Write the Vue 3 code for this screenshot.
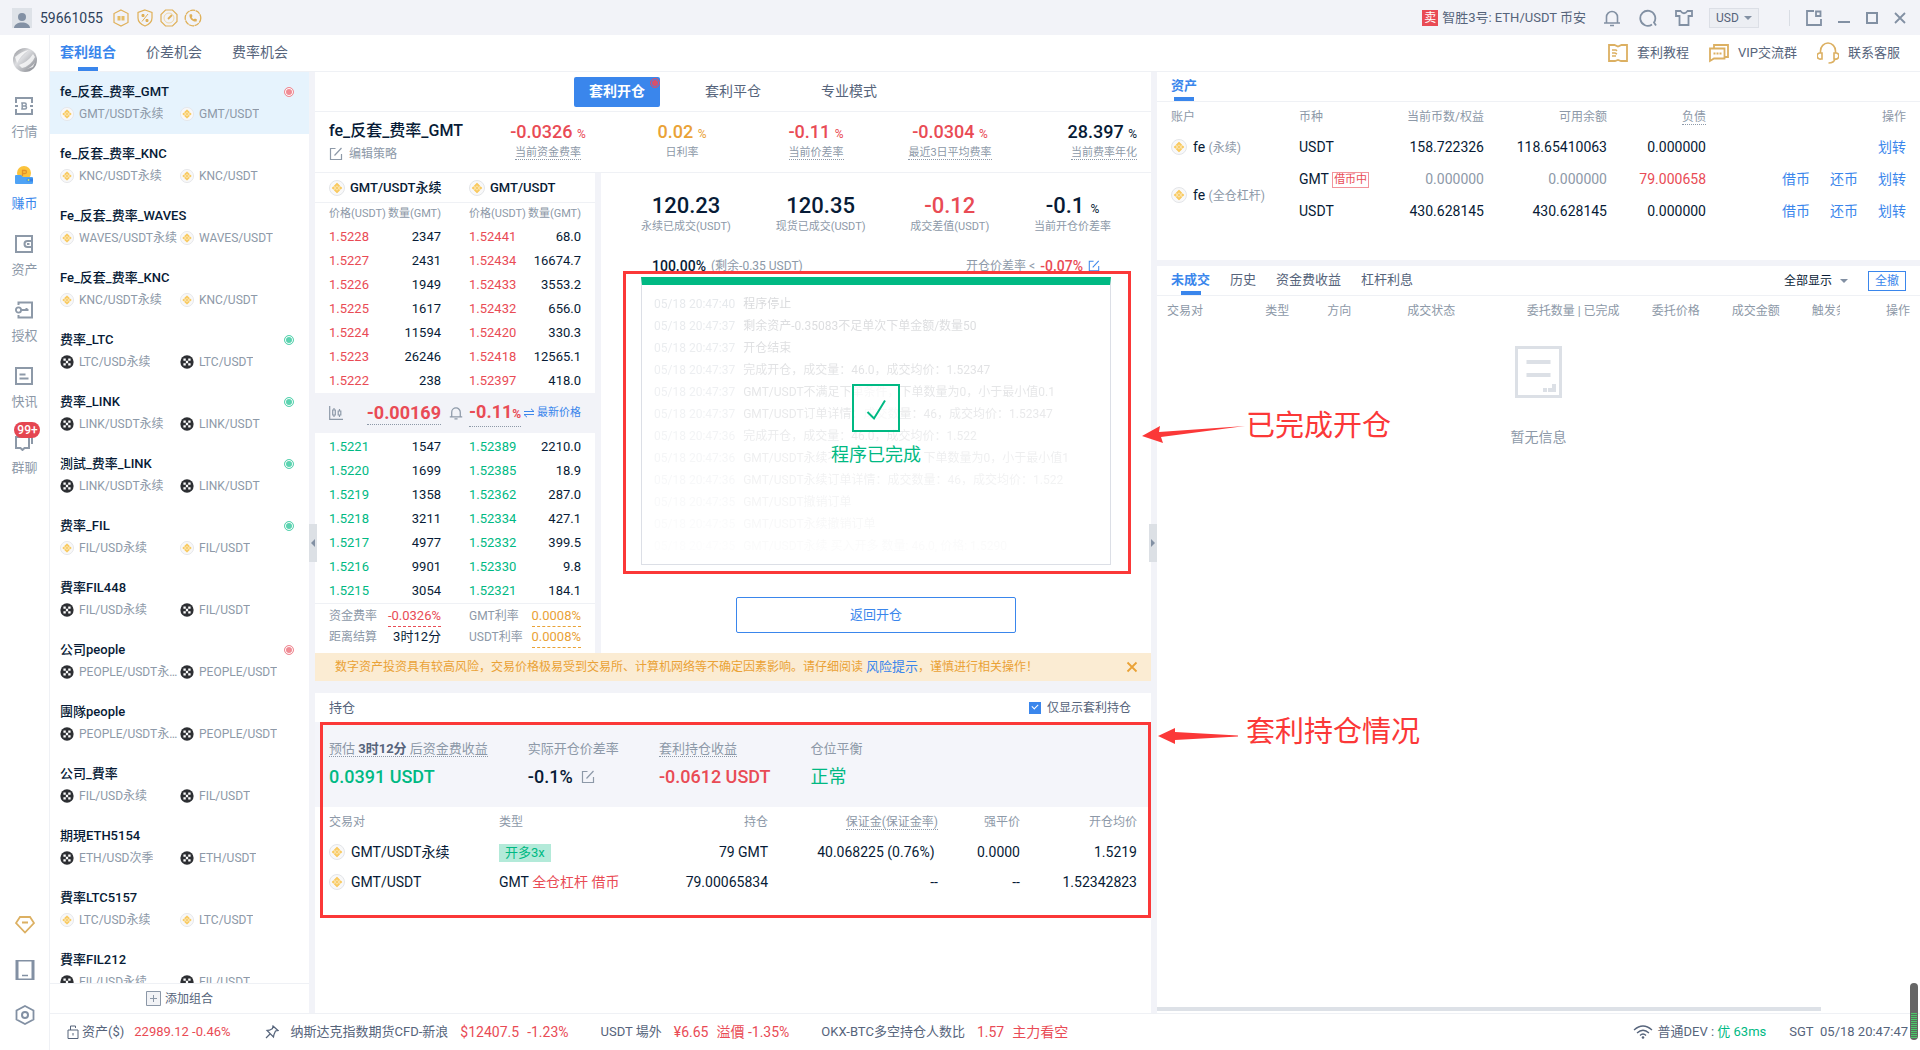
<script setup>
import { ref } from 'vue'

const topTabs = ['套利组合', '价差机会', '费率机会']
const modeTabs = ['套利开仓', '套利平仓', '专业模式']
const orderTabs = ['未成交', '历史', '资金费收益', '杠杆利息']
const badges = ['b-hex', 'b-shield', 'b-gauge', 'b-phone']

const navItems = [
  { icon: 'n-market', label: '行情' },
  { icon: 'n-earn', label: '赚币', active: true },
  { icon: 'n-wallet', label: '资产' },
  { icon: 'n-key', label: '授权' },
  { icon: 'n-news', label: '快讯' },
  { icon: 'n-chat', label: '群聊', badge: '99+' },
]

const combos = [
  { name: 'fe_反套_费率_GMT', a: 'GMT/USDT永续', b: 'GMT/USDT', coin: 'c-bn', dot: 'red', on: true },
  { name: 'fe_反套_费率_KNC', a: 'KNC/USDT永续', b: 'KNC/USDT', coin: 'c-bn' },
  { name: 'Fe_反套_费率_WAVES', a: 'WAVES/USDT永续', b: 'WAVES/USDT', coin: 'c-bn' },
  { name: 'Fe_反套_费率_KNC', a: 'KNC/USDT永续', b: 'KNC/USDT', coin: 'c-bn' },
  { name: '费率_LTC', a: 'LTC/USD永续', b: 'LTC/USDT', coin: 'c-ok', dot: 'green' },
  { name: '费率_LINK', a: 'LINK/USDT永续', b: 'LINK/USDT', coin: 'c-ok', dot: 'green' },
  { name: '測試_费率_LINK', a: 'LINK/USDT永续', b: 'LINK/USDT', coin: 'c-ok', dot: 'green' },
  { name: '费率_FIL', a: 'FIL/USD永续', b: 'FIL/USDT', coin: 'c-bn', dot: 'green' },
  { name: '費率FIL448', a: 'FIL/USD永续', b: 'FIL/USDT', coin: 'c-ok' },
  { name: '公司people', a: 'PEOPLE/USDT永续', b: 'PEOPLE/USDT', coin: 'c-ok', dot: 'red' },
  { name: '團隊people', a: 'PEOPLE/USDT永续', b: 'PEOPLE/USDT', coin: 'c-ok' },
  { name: '公司_費率', a: 'FIL/USD永续', b: 'FIL/USDT', coin: 'c-ok' },
  { name: '期現ETH5154', a: 'ETH/USD次季', b: 'ETH/USDT', coin: 'c-ok' },
  { name: '費率LTC5157', a: 'LTC/USD永续', b: 'LTC/USDT', coin: 'c-bn' },
  { name: '費率FIL212', a: 'FIL/USD永续', b: 'FIL/USDT', coin: 'c-ok' },
]

const rates = [
  { v: '-0.0326', l: '当前资金费率', c: 'red', tip: true },
  { v: '0.02', l: '日利率', c: 'orange' },
  { v: '-0.11', l: '当前价差率', c: 'red', tip: true },
  { v: '-0.0304', l: '最近3日平均费率', c: 'red', tip: true },
  { v: '28.397', l: '当前费率年化', c: '', tip: true },
]

const asks = [
  ['1.5228', '2347', '1.52441', '68.0'],
  ['1.5227', '2431', '1.52434', '16674.7'],
  ['1.5226', '1949', '1.52433', '3553.2'],
  ['1.5225', '1617', '1.52432', '656.0'],
  ['1.5224', '11594', '1.52420', '330.3'],
  ['1.5223', '26246', '1.52418', '12565.1'],
  ['1.5222', '238', '1.52397', '418.0'],
]
const bids = [
  ['1.5221', '1547', '1.52389', '2210.0'],
  ['1.5220', '1699', '1.52385', '18.9'],
  ['1.5219', '1358', '1.52362', '287.0'],
  ['1.5218', '3211', '1.52334', '427.1'],
  ['1.5217', '4977', '1.52332', '399.5'],
  ['1.5216', '9901', '1.52330', '9.8'],
  ['1.5215', '3054', '1.52321', '184.1'],
]

const deals = [
  { v: '120.23', l: '永续已成交(USDT)' },
  { v: '120.35', l: '现货已成交(USDT)' },
  { v: '-0.12', l: '成交差值(USDT)', c: 'red' },
  { v: '-0.1', l: '当前开仓价差率', unit: '%' },
]

const logs = [
  ['05/18 20:47:40', '程序停止'],
  ['05/18 20:47:37', '剩余资产-0.35083不足单次下单金额/数量50'],
  ['05/18 20:47:37', '开仓结束'],
  ['05/18 20:47:37', '完成开仓，成交量：46.0，成交均价：1.52347'],
  ['05/18 20:47:37', 'GMT/USDT不满足下单条件，下单数量为0，小于最小值0.1'],
  ['05/18 20:47:37', 'GMT/USDT订单详情：成交数量：46，成交均价：1.52347'],
  ['05/18 20:47:36', '完成开仓，成交量：46.0，成交均价：1.522'],
  ['05/18 20:47:36', 'GMT/USDT永续不满足下单条件，下单数量为0，小于最小值1'],
  ['05/18 20:47:36', 'GMT/USDT永续订单详情：成交数量：46，成交均价：1.522'],
  ['05/18 20:47:35', 'GMT/USDT撤销订单'],
  ['05/18 20:47:35', 'GMT/USDT永续撤销订单'],
  ['05/18 20:47:35', 'GMT/USDT永续 买入开多 数量: 46.0, 价格: 1.5290'],
]

const onlyArb = ref(true)
const currency = ref('USD')
const orderFilter = ref('全部显示')
</script>

<template>
  <div class="app">
    <svg class="sprite" aria-hidden="true">
      <symbol id="c-bn" viewBox="0 0 16 16">
        <circle cx="8" cy="8" r="7.5" fill="#f8f8f9" stroke="#e3e5e8" />
        <path d="M8 2.800 13.200 8 8 13.200 2.800 8Z" fill="#fbe3ab" />
        <path d="M8 2.800 11 5.800 9.800 7 8 5.200 6.200 7 5 5.800ZM8 13.200 11 10.200 9.800 9 8 10.800 6.200 9 5 10.200ZM4.200 6.600 5.600 8 4.200 9.400 2.800 8ZM11.800 6.600 13.200 8 11.800 9.400 10.400 8ZM8 6.600 9.400 8 8 9.400 6.600 8Z" fill="#f8c95f" />
      </symbol>
      <symbol id="c-ok" viewBox="0 0 16 16">
        <circle cx="8" cy="8" r="7.6" fill="#2d2f33" />
        <path d="M3.900 3.900h2.700v2.700H3.900ZM9.400 3.900h2.700v2.700H9.400ZM6.700 6.700h2.600v2.600H6.700ZM3.900 9.400h2.700v2.700H3.900ZM9.400 9.400h2.700v2.700H9.400Z" fill="#fff" />
      </symbol>
      <symbol id="edit" viewBox="0 0 14 14">
        <path d="M6.5 1.5H1.5V12.5H12.5V7M5.5 8.5 12.5 1" fill="none" stroke="currentColor" stroke-width="1.2" />
      </symbol>
      <symbol id="bell" viewBox="0 0 18 18">
        <path d="M1 14H17M3.5 14V8a5.5 5.5 0 0 1 11 0V14M7 16.5h4" fill="none" stroke="currentColor" stroke-width="1.6" />
      </symbol>
      <symbol id="b-hex" viewBox="0 0 18 18">
        <path d="M9 1 16 4.5V13.500L9 17 2 13.500V4.500Z" fill="none" stroke="#dfb058" stroke-width="1.2" />
        <path d="M5.500 7h3v4.500h-3ZM9.500 7h3v4.500h-3Z" fill="#e6bd66" />
      </symbol>
      <symbol id="b-shield" viewBox="0 0 18 18">
        <path d="M9 1 16 3.500V9C16 13 13 15.500 9 17 5 15.500 2 13 2 9V3.500Z" fill="none" stroke="#dfb058" stroke-width="1.2" />
        <path d="M6 12.500 12 5M6 5.500h2v2H6ZM10 10.500h2v2h-2Z" fill="#dfb058" stroke="#dfb058" />
      </symbol>
      <symbol id="b-gauge" viewBox="0 0 18 18">
        <path d="M5.500 1h7L17 5.500v7L12.500 17h-7L1 12.500v-7Z" fill="none" stroke="#dfb058" stroke-width="1.2" />
        <circle cx="9" cy="9" r="5" fill="none" stroke="#efd8a8" />
        <path d="M8 10 12 6" stroke="#dfb058" stroke-width="1.8" />
      </symbol>
      <symbol id="b-phone" viewBox="0 0 18 18">
        <circle cx="9" cy="9" r="7.800" fill="none" stroke="#dfb058" stroke-width="1.300" stroke-dasharray="5 .6" />
        <path d="M5.500 5.500C5 9.500 8.500 13 12.500 12.500L13 10.500 11 9.500 9.800 10.300C9 10 8 9 7.700 8.200L8.500 7 7.500 5Z" fill="#dfb058" />
      </symbol>
      <symbol id="n-market" viewBox="0 0 18 18">
        <path d="M1 6V1H17V6M1 12V17H17V12" fill="none" stroke="currentColor" stroke-width="2" />
        <path d="M0 8h3v2H0ZM15 8h3v2h-3Z" fill="currentColor" />
        <path d="M7.200 5.500V12.500M6.200 6h3.500a1.400 1.400 0 0 1 0 3H7.200h2.800a1.500 1.500 0 0 1 0 3H6.200" fill="none" stroke="currentColor" stroke-width="1.500" />
      </symbol>
      <symbol id="n-earn" viewBox="0 0 18 18">
        <circle cx="9" cy="7" r="7" fill="#fbc33c" />
        <path d="M7.500 10V4M7 4.500h3a1.200 1.200 0 0 1 0 3H7.500h3" fill="none" stroke="#e2932a" stroke-width="1.300" />
        <path d="M0 10Q0 9 1 9H6L8 11H17Q18 11 18 12V17Q18 18 17 18H1Q0 18 0 17Z" fill="#4fa3f5" />
        <path d="M13 12.500h5v3h-5a1.500 1.500 0 0 1 0-3Z" fill="#3483e8" />
        <circle cx="13.500" cy="14" r="1" fill="#cfe96a" />
      </symbol>
      <symbol id="n-wallet" viewBox="0 0 18 18">
        <path d="M1 1H17V17H1ZM17 6H12.500a3 3 0 0 0 0 6H17" fill="none" stroke="currentColor" stroke-width="2" />
        <path d="M12 8h2.500v2H12Z" fill="currentColor" />
      </symbol>
      <symbol id="n-key" viewBox="0 0 18 18">
        <path d="M3.500 4V1.500H17V16.500H3.500V14" fill="none" stroke="currentColor" stroke-width="2" />
        <circle cx="3.500" cy="9" r="2.600" fill="none" stroke="currentColor" stroke-width="1.800" />
        <path d="M6 9H13.500M11.500 7v2" stroke="currentColor" stroke-width="2" />
      </symbol>
      <symbol id="n-news" viewBox="0 0 18 18">
        <path d="M1 1H17V17H1ZM4.500 7.500H10.500M4.500 11.500H13.500" fill="none" stroke="currentColor" stroke-width="2" />
      </symbol>
      <symbol id="n-chat" viewBox="0 0 18 18">
        <path d="M1 4V15H5.500L7.500 17 9.500 15H14V4ZM17 1V11" fill="none" stroke="currentColor" stroke-width="2" />
      </symbol>
    </svg>

    <header class="titlebar">
      <svg class="avatar" viewBox="0 0 20 20"><path d="M0 0H20V20H0Z" fill="#dee2e8" /><circle cx="10" cy="9" r="4" fill="#8391a5" /><path d="M2 20C2 12.500 18 12.500 18 20Z" fill="#8391a5" /></svg>
      <span class="uid">59661055</span>
      <svg v-for="b in badges" :key="b" class="badge-icon"><use :href="'#' + b" /></svg>
      <div class="title-right">
        <span class="sell">卖</span>
        <span class="signal">智胜3号: ETH/USDT 币安</span>
        <button class="ib" aria-label="通知"><svg class="i18"><use href="#bell" /></svg></button>
        <button class="ib" aria-label="搜索"><svg class="i18" viewBox="0 0 18 18"><path d="M13 15.500A7.500 7.500 0 1 1 15 13.500L17 16.500" fill="none" stroke="currentColor" stroke-width="1.800" /></svg></button>
        <button class="ib" aria-label="皮肤"><svg class="i18" viewBox="0 0 18 18"><path d="M1 2H5.500Q9 6.500 12.500 2H17V7H13.500V16H4.500V7H1Z" fill="none" stroke="currentColor" stroke-width="1.800" /></svg></button>
        <span class="currency">
          <select v-model="currency" aria-label="计价货币"><option>USD</option></select>
          <i class="caret"></i>
        </span>
        <i class="sep"></i>
        <button class="ib" aria-label="弹出"><svg class="i16" viewBox="0 0 16 16"><path d="M8 1H1V15H15V9M10 1.500H14.500V6H10Z" fill="none" stroke="currentColor" stroke-width="1.800" /></svg></button>
        <button class="ib" aria-label="最小化"><svg class="i12" viewBox="0 0 12 12"><path d="M0 10H12" stroke="currentColor" stroke-width="2" /></svg></button>
        <button class="ib" aria-label="最大化"><svg class="i12" viewBox="0 0 12 12"><path d="M1 1H11V11H1Z" fill="none" stroke="currentColor" stroke-width="2" /></svg></button>
        <button class="ib" aria-label="关闭"><svg class="i12" viewBox="0 0 12 12"><path d="M1 1 11 11M11 1 1 11" stroke="currentColor" stroke-width="1.800" /></svg></button>
      </div>
    </header>

    <div class="shell">
      <aside class="rail">
        <svg class="logo" viewBox="0 0 24 24">
          <defs><linearGradient id="lg" x1="0" y1="0" x2="1" y2="1"><stop offset="0" stop-color="#8e9095" /><stop offset=".4" stop-color="#dcdde0" /><stop offset="1" stop-color="#7d8087" /></linearGradient></defs>
          <circle cx="12" cy="12" r="12" fill="url(#lg)" />
          <path d="M2 9Q9 3 16 2 8 7 4 15ZM6 17Q15 14 20 6L22 9Q18 18 9 20ZM14 21Q20 18 22 14L20 19Z" fill="#fff" opacity=".75" />
        </svg>
        <nav>
          <a v-for="n in navItems" :key="n.label" href="#" class="nav" :class="{ active: n.active }">
            <svg class="i18"><use :href="'#' + n.icon" /></svg>
            <span>{{ n.label }}</span>
            <b v-if="n.badge" class="count">{{ n.badge }}</b>
          </a>
        </nav>
        <div class="rail-foot">
          <button class="ib gold" aria-label="会员"><svg class="i20" viewBox="0 0 20 20"><path d="M5 2H15L19 8 10 17.500 1 8Z M7 7.500H13" fill="none" stroke="currentColor" stroke-width="1.800" /></svg></button>
          <button class="ib" aria-label="手机"><svg class="i20" viewBox="0 0 20 20"><path d="M2 0H18V20H2Z" fill="none" stroke="currentColor" stroke-width="3" /><path d="M7 15.500H13" stroke="currentColor" stroke-width="1.500" /></svg></button>
          <button class="ib" aria-label="设置"><svg class="i20" viewBox="0 0 20 20"><path d="M10 1 18.500 5.500V14.500L10 19 1.500 14.500V5.500Z" fill="none" stroke="currentColor" stroke-width="1.800" /><circle cx="10" cy="10" r="3" fill="none" stroke="currentColor" stroke-width="2" /></svg></button>
        </div>
      </aside>

      <div class="body">
        <nav class="subnav">
          <a v-for="(t, i) in topTabs" :key="t" href="#" :class="{ on: i === 0 }">{{ t }}</a>
          <div class="help">
            <a href="#"><svg class="i20" viewBox="0 0 20 20"><path d="M1 2H6.500L10 3.500 13.500 2H19V18H13L10 17 7 18H1Z" fill="none" stroke="currentColor" stroke-width="1.800" /><path d="M4 7h4l1 1M4 10h3l2 1M4 13h4" fill="none" stroke="currentColor" stroke-width="1.400" /></svg><span>套利教程</span></a>
            <a href="#"><svg class="i20" viewBox="0 0 20 20"><path d="M5 5V2H19V14H16M1 5.500H15.500V15.500H5L1 18Z" fill="none" stroke="currentColor" stroke-width="1.800" /><path d="M4.500 9.500h2v2h-2ZM7.500 9.500h2v2h-2ZM10.500 9.500h2v2h-2Z" fill="currentColor" /></svg><span>VIP交流群</span></a>
            <a href="#"><svg class="i22" viewBox="0 0 22 22"><path d="M3.500 11V9a7.500 8 0 0 1 15 0V11M2.500 11h2.500v6H4a3 3 0 0 1-1.500-6ZM19.500 11H17v6h1a3 3 0 0 0 1.500-6ZM18 17Q17 21 11.500 21" fill="none" stroke="currentColor" stroke-width="1.600" /></svg><span>联系客服</span></a>
          </div>
        </nav>

        <div class="cols">
          <section class="combos">
            <ul>
              <li v-for="(c, i) in combos" :key="i" :class="{ on: c.on }">
                <div class="combo-name"><span>{{ c.name }}</span><i v-if="c.dot" class="dot" :class="c.dot"></i></div>
                <div class="combo-pairs">
                  <span><svg class="coin-s"><use :href="'#' + c.coin" /></svg><em>{{ c.a }}</em></span>
                  <span><svg class="coin-s"><use :href="'#' + c.coin" /></svg><em>{{ c.b }}</em></span>
                </div>
              </li>
            </ul>
            <button class="add"><svg viewBox="0 0 15 15"><path d="M.5.5H14.500V14.500H.5Z" fill="#f2f3f6" stroke="#8b97a7" /><path d="M7.500 4V11M4 7.500H11" stroke="#8b97a7" /></svg>添加组合</button>
          </section>

          <main class="center">
            <button class="handle left" aria-label="收起左栏"></button>
            <button class="handle right" aria-label="收起右栏"></button>
            <div class="modes">
              <button v-for="(m, i) in modeTabs" :key="m" :class="{ on: i === 0 }">{{ m }}<i v-if="i === 0" class="dot rec"></i></button>
            </div>
            <div class="strategy">
              <div class="strategy-name">
                <h1>fe_反套_费率_GMT</h1>
                <button><svg class="i14"><use href="#edit" /></svg>编辑策略</button>
              </div>
              <div v-for="r in rates" :key="r.l" class="rate">
                <div class="rate-v" :class="r.c">{{ r.v }} <small>%</small></div>
                <div class="rate-l"><span :class="{ tip: r.tip }">{{ r.l }}</span></div>
              </div>
            </div>

            <div class="trade">
              <section class="book">
                <div class="book-head">
                  <div><svg class="coin"><use href="#c-bn" /></svg>GMT/USDT永续</div>
                  <div><svg class="coin"><use href="#c-bn" /></svg>GMT/USDT</div>
                </div>
                <table class="book-table">
                  <thead><tr><th>价格(USDT)</th><th>数量(GMT)</th><th>价格(USDT)</th><th>数量(GMT)</th></tr></thead>
                  <tbody class="asks"><tr v-for="r in asks" :key="r[0]"><td v-for="(v, i) in r" :key="i">{{ v }}</td></tr></tbody>
                </table>
                <div class="mid">
                  <div>
                    <svg class="i14 gray" viewBox="0 0 14 14"><path d="M.7 0V13.300H14M5 2V4M5 9v2M3.700 4h2.600v5H3.700ZM10.500 3V5M10.500 9v2M9.200 5h2.600v4H9.200Z" fill="none" stroke="currentColor" stroke-width="1.200" /></svg>
                    <b class="tip big">-0.00169</b>
                    <svg class="i14 gray mid-bell"><use href="#bell" /></svg>
                  </div>
                  <div>
                    <b class="tip big">-0.11<small>%</small></b>
                    <button><svg viewBox="0 0 10 10"><path d="M0 3.500H10L7 .8M10 6.500H0L3 9.200" fill="none" stroke="currentColor" /></svg>最新价格</button>
                  </div>
                </div>
                <table class="book-table bids-table">
                  <tbody class="bids"><tr v-for="r in bids" :key="r[0]"><td v-for="(v, i) in r" :key="i">{{ v }}</td></tr></tbody>
                </table>
                <div class="book-foot">
                  <div><span>资金费率</span><b class="red dash">-0.0326%</b></div>
                  <div><span>GMT利率</span><b class="orange dash">0.0008%</b></div>
                  <div><span>距离结算</span><b>3时12分</b></div>
                  <div><span>USDT利率</span><b class="orange dash">0.0008%</b></div>
                </div>
              </section>

              <section class="run">
                <div class="deals">
                  <div v-for="d in deals" :key="d.l">
                    <div class="deal-v" :class="d.c">{{ d.v }}<small v-if="d.unit">{{ d.unit }}</small></div>
                    <div class="deal-l">{{ d.l }}</div>
                  </div>
                </div>
                <div class="progress">
                  <b>100.00%</b><span>(剩余-0.35 USDT)</span>
                  <div><span>开仓价差率 &lt;</span><b class="red">-0.07%</b><svg class="i12 blue"><use href="#edit" /></svg></div>
                </div>
                <div class="log">
                  <ul><li v-for="(l, i) in logs" :key="i"><time>{{ l[0] }}</time><span>{{ l[1] }}</span></li></ul>
                  <div class="done">
                    <svg viewBox="0 0 48 48"><path d="M1 1H47V47H1Z" fill="#fff" fill-opacity=".7" /><path d="M1 1H47V47H1ZM15.500 28 22 34.500 33 16.500" fill="none" stroke="#00b983" stroke-width="2" /></svg>
                    <span>程序已完成</span>
                  </div>
                  <div class="mark mark-log"></div>
                  <div class="note note-log">
                    <svg viewBox="0 0 104 40"><path d="M0 30 18 20 17 26 103 20 19 31 21 37Z" fill="#fb3838" /></svg>
                    <span>已完成开仓</span>
                  </div>
                </div>
                <button class="back">返回开仓</button>
              </section>
            </div>

            <div class="warn">
              <p>数字资产投资具有较高风险，交易价格极易受到交易所、计算机网络等不确定因素影响。请仔细阅读 <a href="#">风险提示</a>，谨慎进行相关操作！</p>
              <button class="ib" aria-label="关闭提示"><svg class="i12" viewBox="0 0 12 12"><path d="M1.500 1.500 10.500 10.500M10.500 1.500 1.500 10.500" stroke="currentColor" stroke-width="1.800" /></svg></button>
            </div>

            <section class="positions">
              <div class="pos-head">
                <h2>持仓</h2>
                <label><input v-model="onlyArb" type="checkbox" />仅显示套利持仓</label>
              </div>
              <div class="pos-body">
                <div class="summary">
                  <div><div class="sum-l"><span class="tip">预估 <b>3时12分</b> 后资金费收益</span></div><div class="sum-v green">0.0391 USDT</div></div>
                  <div><div class="sum-l">实际开仓价差率</div><div class="sum-v">-0.1% <svg class="i14 gray"><use href="#edit" /></svg></div></div>
                  <div><div class="sum-l"><span class="tip">套利持仓收益</span></div><div class="sum-v red">-0.0612 USDT</div></div>
                  <div><div class="sum-l">仓位平衡</div><div class="sum-v plain green">正常</div></div>
                </div>
                <table class="pos-table">
                  <colgroup><col class="w170" /><col class="w130" /><col class="w139" /><col class="w170" /><col class="w82" /><col class="w117" /></colgroup>
                  <thead><tr><th>交易对</th><th>类型</th><th class="r">持仓</th><th class="r"><span class="tip">保证金(保证金率)</span></th><th class="r">强平价</th><th class="r">开仓均价</th></tr></thead>
                  <tbody>
                    <tr><td><span class="pair"><svg class="coin"><use href="#c-bn" /></svg>GMT/USDT永续</span></td><td><span class="tag">开多3x</span></td><td class="r">79 GMT</td><td class="r">40.068225 (0.76%)&nbsp;</td><td class="r">0.0000</td><td class="r">1.5219</td></tr>
                    <tr><td><span class="pair"><svg class="coin"><use href="#c-bn" /></svg>GMT/USDT</span></td><td>GMT <span class="red">全仓杠杆 借币</span></td><td class="r">79.00065834</td><td class="r">--</td><td class="r">--</td><td class="r">1.52342823</td></tr>
                  </tbody>
                </table>
                <div class="mark mark-pos"></div>
                <div class="note note-pos">
                  <svg viewBox="0 0 80 40"><path d="M0 24 17 16 17 20 80 23.500 80 24.500 17 28 17 32Z" fill="#fb3838" /></svg>
                  <span>套利持仓情况</span>
                </div>
              </div>
            </section>
          </main>

          <div class="side">
            <section class="assets">
              <div class="tabs"><a href="#" class="on">资产</a></div>
              <table class="asset-table">
                <colgroup><col class="w128" /><col class="w95" /><col class="w90" /><col class="w123" /><col class="w99" /><col class="w200" /></colgroup>
                <thead><tr><th>账户</th><th>币种</th><th class="r">当前币数/权益</th><th class="r">可用余额</th><th class="r"><span class="tip">负债</span></th><th class="r">操作</th></tr></thead>
                <tbody>
                  <tr><td><span class="pair"><svg class="coin"><use href="#c-bn" /></svg><span>fe <em>(永续)</em></span></span></td><td>USDT</td><td class="r">158.722326</td><td class="r">118.65410063</td><td class="r">0.000000</td><td class="ops"><a href="#">划转</a></td></tr>
                  <tr><td rowspan="2"><span class="pair"><svg class="coin"><use href="#c-bn" /></svg><span>fe <em>(全仓杠杆)</em></span></span></td><td>GMT <span class="borrow">借币中</span></td><td class="r zero">0.000000</td><td class="r zero">0.000000</td><td class="r red">79.000658</td><td class="ops"><a href="#">借币</a><a href="#">还币</a><a href="#">划转</a></td></tr>
                  <tr><td>USDT</td><td class="r">430.628145</td><td class="r">430.628145</td><td class="r">0.000000</td><td class="ops"><a href="#">借币</a><a href="#">还币</a><a href="#">划转</a></td></tr>
                </tbody>
              </table>
            </section>
            <section class="orders">
              <div class="tabs">
                <a v-for="(t, i) in orderTabs" :key="t" href="#" :class="{ on: i === 0 }">{{ t }}</a>
                <div class="order-tools">
                  <span class="filter"><select v-model="orderFilter" aria-label="筛选"><option>全部显示</option></select><i class="caret"></i></span>
                  <button class="cancel">全撤</button>
                </div>
              </div>
              <table class="order-table">
                <colgroup><col class="w98" /><col class="w62" /><col class="w80" /><col class="w95" /><col class="w117" /><col class="w80" /><col class="w80" /><col class="w60" /><col class="w70" /></colgroup>
                <thead><tr><th>交易对</th><th>类型</th><th>方向</th><th>成交状态</th><th class="r">委托数量 | 已完成</th><th class="r">委托价格</th><th class="r">成交金额</th><th class="clip">触发条件</th><th class="r">操作</th></tr></thead>
              </table>
              <div class="empty">
                <svg viewBox="0 0 47 52"><path d="M1.500 1.500H45.500V50.500H1.500Z" fill="none" stroke="#dce0e6" stroke-width="3" /><path d="M11.500 14H35.500V18H11.500ZM11.500 27H35.500V31H11.500ZM28 42h4v4h-4ZM33 42h4v-4h4v8h-8Z" fill="#dce0e6" /></svg>
                <p>暂无信息</p>
              </div>
              <div class="hscroll"><i></i></div>
            </section>
          </div>
        </div>

        <footer class="status">
          <svg class="lock" viewBox="0 0 12 14"><path d="M1 5H11V13.500H1ZM3.500 5V1H8.500V3M6 8v2.500" fill="none" stroke="currentColor" /></svg>
          <span class="st-asset">资产($)</span><span class="red st-first">22989.12 -0.46%</span>
          <svg class="pin" viewBox="0 0 14 14"><path d="M8 1 13 5.500 10.500 6 9 9.500 8.500 12 2 5.500 4.500 5.200 7.500 3.500ZM5 9 1 13" fill="none" stroke="currentColor" stroke-width="1.200" /></svg>
          <span>纳斯达克指数期货CFD-新浪</span><span class="red st-v">$12407.5</span><span class="red st-w">-1.23%</span>
          <span class="st-g">USDT 場外</span><span class="red st-v">¥6.65</span><span class="red st-w">溢價 -1.35%</span>
          <span class="st-g">OKX-BTC多空持仓人数比</span><span class="red st-v">1.57</span><span class="red st-w">主力看空</span>
          <div class="net">
            <svg viewBox="0 0 20 14"><path d="M1 5Q10-3 19 5M4 8Q10 2.500 16 8M7 10.500Q10 7.500 13 10.500" fill="none" stroke="currentColor" stroke-width="1.300" /><circle cx="10" cy="12.500" r="1.300" fill="currentColor" /></svg>
            <span>普通DEV : <b class="green">优 63ms</b></span>
            <span class="clock">SGT&nbsp; 05/18 20:47:47</span>
          </div>
        </footer>
      </div>
    </div>
    <div class="meter"><i></i></div>
  </div>
</template>

<style>
body { margin: 0; background: #fff; }
</style>

<style scoped>
.app {
  --ink: #071b36; --mid: #56647b; --gray: #8d99a8; --line: #eff1f5; --blue: #3a86ec;
  --red: #e94b55; --green: #00b983; --orange: #eaa236; --bg: #f2f3f8;
  position: relative; display: flex; flex-direction: column; height: 100vh; overflow: hidden;
  font-family: Roboto, "Noto Sans CJK SC", sans-serif; font-size: 13px; line-height: 20px; color: var(--ink); background: #fff;
}
.app *, .app *::before, .app *::after { box-sizing: border-box; }
.sprite { position: absolute; width: 0; height: 0; }
svg { display: block; flex: none; }
button, select, input { font: inherit; color: inherit; margin: 0; padding: 0; border: 0; background: none; border-radius: 0; }
a { color: inherit; text-decoration: none; }
ul, p, h1, h2 { margin: 0; padding: 0; list-style: none; font-weight: 400; }
em, i { font-style: normal; }
table { border-collapse: collapse; table-layout: fixed; width: 100%; }
th, td { padding: 0; font-weight: 400; text-align: left; white-space: nowrap; }
.r { text-align: right; }
.red { color: var(--red); }
.green { color: var(--green); }
.orange { color: var(--orange); }
.blue { color: var(--blue); }
.gray { color: var(--gray); }
.tip { border-bottom: 1px dotted var(--gray); }
.ib { display: block; color: #8290a3; }
.i12 { width: 12px; height: 12px; }
.i14 { width: 14px; height: 14px; }
.i16 { width: 16px; height: 16px; }
.i18 { width: 18px; height: 18px; }
.i20 { width: 20px; height: 20px; }
.i22 { width: 22px; height: 22px; }
.coin { width: 16px; height: 16px; }
.coin-s { width: 14px; height: 14px; }
.caret { border: 4px solid transparent; border-top-color: #8290a3; border-bottom: 0; pointer-events: none; }

.titlebar { flex: none; display: flex; align-items: center; height: 35px; padding: 0 14px 0 12px; background: var(--bg); }
.avatar { width: 20px; height: 20px; }
.uid { margin: 0 9px 0 8px; font-size: 14px; color: #2d3f5a; }
.badge-icon { width: 18px; height: 18px; margin-right: 6px; }
.title-right { display: flex; align-items: center; margin-left: auto; color: var(--mid); }
.sell { width: 16px; height: 16px; background: var(--red); color: #fff; font-size: 12px; line-height: 16px; text-align: center; }
.signal { margin: 0 17px 0 4px; }
.title-right .ib { margin-right: 16px; }
.title-right .ib + .ib { margin-left: 2px; }
.currency { position: relative; display: flex; align-items: center; width: 50px; height: 20px; border: 1px solid #dcdfe6; font-size: 12px; background: #eceef3; }
.currency select { appearance: none; width: 100%; height: 18px; padding-left: 6px; line-height: 18px; }
.currency .caret { position: absolute; right: 6px; }
.sep { width: 1px; height: 16px; margin: 0 16px 0 30px; background: #d9dde4; }
.title-right .sep ~ .ib + .ib { margin-left: 0; }
.title-right .sep ~ .ib:last-child { margin-right: 0; }

.shell { flex: 1; display: flex; min-height: 0; }
.rail { flex: none; display: flex; flex-direction: column; align-items: center; width: 50px; border-right: 1px solid var(--line); padding: 13px 0 25px; }
.logo { width: 24px; height: 24px; margin-bottom: 25px; }
.nav { position: relative; display: flex; flex-direction: column; align-items: center; height: 66px; color: var(--gray); }
.nav span { margin-top: 7px; }
.nav.active { height: 72px; padding-top: 3px; color: var(--blue); }
.nav.active span { margin-top: 10px; }
.count { position: absolute; top: -11px; left: 3px; width: 26px; height: 16px; border-radius: 8px; background: #e54651; color: #fff; font-size: 12px; font-weight: 500; line-height: 16px; text-align: center; }
.rail-foot { display: flex; flex-direction: column; gap: 25px; margin-top: auto; }
.rail-foot .gold { color: #dcb062; }

.body { flex: 1; display: flex; flex-direction: column; min-width: 0; }
.subnav { flex: none; display: flex; gap: 30px; height: 37px; padding: 0 20px 0 10px; border-bottom: 1px solid var(--line); font-size: 14px; line-height: 34px; color: var(--mid); }
.subnav > a.on, .tabs > a.on { position: relative; color: var(--blue); font-weight: 700; }
.subnav > a.on::after, .tabs > a.on::after { content: ""; position: absolute; left: 50%; bottom: 0; width: 20px; height: 4px; margin-left: -10px; background: var(--blue); }
.help { display: flex; gap: 20px; margin-left: auto; font-size: 13px; }
.help a { display: flex; align-items: center; gap: 9px; }
.help svg { color: #dcb062; }

.cols { flex: 1; display: flex; gap: 6px; min-height: 0; background: var(--bg); }
.combos { flex: 0 0 259px; display: flex; flex-direction: column; min-width: 0; background: #fff; }
.combos ul { flex: 1; min-height: 0; overflow: hidden; }
.combos li { height: 62px; padding: 10px 15px 0 10px; }
.combos li.on { background: #e6f3fd; }
.combo-name { display: flex; align-items: center; justify-content: space-between; font-weight: 500; }
.combo-pairs { display: flex; font-size: 12px; line-height: 24px; color: var(--gray); }
.combo-pairs > span { display: flex; align-items: center; gap: 5px; flex: 0 0 120px; min-width: 0; padding-right: 1px; }
.combo-pairs > span + span { flex: 1; }
.combo-pairs em { overflow: hidden; text-overflow: ellipsis; white-space: nowrap; }
.dot { flex: none; width: 10px; height: 10px; border: 1px solid; border-radius: 50%; background: currentColor; box-shadow: inset 0 0 0 1px #fff; }
.dot.red { color: #f08c95; }
.dot.green { color: #5bd3b0; }
.add { flex: none; display: flex; align-items: center; justify-content: center; gap: 4px; height: 30px; border-top: 1px solid var(--line); font-size: 12px; color: var(--mid); }
.add svg { width: 15px; height: 15px; }

.center { position: relative; z-index: 1; flex: 836 1 0; display: flex; flex-direction: column; min-width: 0; }
.handle { position: absolute; top: 452px; z-index: 2; width: 8px; height: 38px; background: #dce0e5; }
.handle::after { content: ""; display: block; margin: 0 auto; width: 4px; border: 4px solid transparent; }
.handle.left { left: -6px; }
.handle.left::after { border-right-color: #8290a3; border-left: 0; }
.handle.right { right: -6px; }
.handle.right::after { border-left-color: #8290a3; border-right: 0; }
.modes { flex: none; display: flex; justify-content: center; align-items: center; gap: 30px; height: 40px; background: #fff; border-bottom: 1px solid var(--line); }
.modes button { position: relative; width: 86px; height: 30px; padding-bottom: 2px; font-size: 14px; color: var(--mid); }
.modes button.on { background: var(--blue); color: #fff; font-weight: 700; border-radius: 2px; }
.dot.rec { position: absolute; top: 1px; right: 0; color: #d9506b; box-shadow: inset 0 0 0 1px var(--blue); }
.strategy { flex: none; display: flex; height: 61px; background: #fff; border-bottom: 1px solid var(--line); padding-top: 8px; }
.strategy-name { flex: 0 0 166px; padding-left: 14px; white-space: nowrap; }
.strategy-name h1 { font-size: 16px; font-weight: 500; line-height: 22px; }
.strategy-name button { display: flex; align-items: center; gap: 6px; margin-top: 2px; font-size: 12px; color: var(--gray); }
.rate { flex: 1 1 0; text-align: center; }
.rate:last-child { text-align: right; }
.rate:last-child > div { padding-right: 14px; }
.rate-v { font-size: 18px; font-weight: 500; line-height: 24px; }
.rate-v small, .deal-v small { font-size: 12px; font-weight: 400; line-height: 1; }
.deal-v small { margin-left: 6px; }
.rate-l { font-size: 11px; line-height: 18px; color: var(--gray); }

.trade { flex: none; display: flex; gap: 6px; }
.book { flex: 0 0 280px; background: #fff; }
.book-head { display: flex; height: 30px; border-bottom: 1px solid var(--line); }
.book-head div { display: flex; align-items: center; gap: 5px; width: 140px; padding-left: 14px; font-weight: 500; white-space: nowrap; }
.book-table th { height: 22px; font-size: 11px; line-height: 20px; color: var(--gray); }
.book-table td { height: 24px; }
.book-table :is(th, td) { width: 70px; padding-left: 14px; }
.book-table :is(th, td):nth-child(even) { padding: 0 14px 0 0; text-align: right; }
.asks td:nth-child(odd) { color: var(--red); }
.bids td:nth-child(odd) { color: var(--green); }
.bids-table { margin-top: 2px; }
.mid { display: flex; height: 40px; background: var(--bg); }
.mid > div { position: relative; display: flex; align-items: center; justify-content: space-between; width: 140px; padding: 0 14px; }
.mid-bell { position: absolute; left: 134px; }
.mid .big { font-size: 18px; line-height: 23px; color: var(--red); }
.mid small { font-size: 12px; }
.mid button { display: flex; align-items: center; gap: 3px; font-size: 11px; color: var(--blue); }
.mid button svg { width: 10px; height: 10px; }
.book-foot { display: flex; flex-wrap: wrap; align-content: flex-start; height: 50px; border-top: 1px solid var(--line); padding-top: 2px; }
.book-foot div { display: flex; justify-content: space-between; align-items: flex-start; width: 140px; height: 21px; padding: 0 14px; }
.book-foot span { font-size: 12px; color: var(--gray); }
.book-foot b { font-weight: 400; line-height: 20px; }
.dash { border-bottom: 1px dashed; }

.run { flex: 1; min-width: 0; padding: 20px 40px; background: #fff; }
.deals { display: flex; justify-content: space-between; text-align: center; }
.deal-v { height: 26px; font-size: 22px; font-weight: 500; line-height: 26px; }
.deal-l { font-size: 11px; line-height: 16px; color: var(--gray); }
.progress { display: flex; align-items: center; gap: 5px; height: 22px; margin-top: 20px; padding: 0 11px; font-size: 12px; color: var(--gray); }
.progress b { font-size: 14px; font-weight: 500; }
.progress > b { color: var(--ink); }
.progress b.red { color: var(--red); }
.progress div { display: flex; align-items: center; gap: 5px; margin-left: auto; }
.log { position: relative; border: 1px solid #dcdfe6; border-top: 8px solid var(--green); padding: 8px 12px 7px; }
.log ul { font-size: 12px; line-height: 22px; color: #8d99a8; -webkit-mask-image: linear-gradient(rgba(0,0,0,.28), rgba(0,0,0,.16) 45%, rgba(0,0,0,.02)); mask-image: linear-gradient(rgba(0,0,0,.28), rgba(0,0,0,.16) 45%, rgba(0,0,0,.02)); }
.log li { display: flex; gap: 8px; white-space: nowrap; }
.log time { opacity: .8; }
.log li span { color: #71757e; }
.done { position: absolute; inset: 99px 0 auto; display: flex; flex-direction: column; align-items: center; color: var(--green); font-size: 18px; }
.done svg { width: 48px; height: 48px; }
.done span { margin-top: 10px; line-height: 26px; background: #fff; }
.mark { position: absolute; border: 3px solid #fb3838; pointer-events: none; }
.mark-log { inset: -14px -21px -10px -19px; }
.mark-pos { inset: 0 0 0 5px; }
.note { position: absolute; left: 100%; display: flex; align-items: center; color: #fb3838; font-size: 29px; line-height: 40px; white-space: nowrap; }
.note-log { top: 121px; margin-left: 32px; }
.note-log svg { width: 104px; height: 40px; }
.note-pos { top: -10px; margin-left: 7px; gap: 8px; }
.note-pos svg { width: 80px; height: 40px; }
.back { display: block; width: 280px; height: 36px; margin: 32px auto 0; border: 1px solid var(--blue); border-radius: 2px; color: var(--blue); }

.warn { flex: none; display: flex; align-items: center; justify-content: space-between; height: 28px; padding: 0 13px 0 20px; background: #fbecd3; color: var(--orange); font-size: 12px; white-space: nowrap; }
.warn a { font-size: 13px; color: var(--blue); }
.warn .ib { color: var(--orange); }

.positions { flex: 1; margin-top: 12px; background: #fff; }
.pos-head { display: flex; align-items: center; justify-content: space-between; height: 29px; padding: 0 20px 0 14px; color: var(--mid); }
.pos-head h2 { font-size: 13px; }
.pos-head label { display: flex; align-items: center; gap: 6px; font-size: 12px; }
.pos-head input { position: relative; appearance: none; width: 12px; height: 12px; border: 1px solid var(--blue); }
.pos-head input:checked { background: var(--blue); }
.pos-head input:checked::after { content: ""; position: absolute; left: 2px; top: 1px; width: 6px; height: 4px; border: solid #fff; border-width: 0 0 1px 1px; transform: rotate(-45deg); }
.pos-body { position: relative; padding-bottom: 21px; }
.summary { display: flex; gap: 40px; height: 85px; padding: 17px 14px 0; background: #f4f5fa; white-space: nowrap; }
.sum-l { color: var(--gray); }
.sum-l b { color: var(--mid); }
.sum-v { display: flex; align-items: center; gap: 8px; margin-top: 4px; font-size: 18px; font-weight: 500; line-height: 28px; }
.sum-v.plain { font-weight: 400; }
.pos-table { width: calc(100% - 28px); margin: 0 14px; }
.pos-table :is(th, td) { height: 30px; font-size: 14px; }
.pos-table th, .asset-table th { font-size: 12px; color: var(--gray); }
.pair { display: flex; align-items: center; gap: 6px; }
.tag { display: inline-block; padding: 0 6px; background: #b3ead9; color: var(--green); font-size: 13px; line-height: 18px; }

.side { flex: 763 1 0; display: flex; flex-direction: column; gap: 6px; min-width: 0; }
.assets { flex: none; padding-bottom: 33px; background: #fff; }
.tabs { display: flex; gap: 20px; height: 30px; padding: 0 14px; border-bottom: 1px solid var(--line); line-height: 28px; color: var(--mid); }
.asset-table { width: calc(100% - 28px); margin: 0 14px; }
.asset-table th { height: 29px; }
.asset-table td { height: 32px; font-size: 14px; }
.asset-table em { font-size: 12px; color: var(--gray); }
.asset-table .zero { color: var(--gray); }
.asset-table .ops { text-align: right; color: var(--blue); }
.ops a + a { margin-left: 20px; }
.borrow { display: inline-block; padding: 0 1px; border: 1px solid #f2949b; color: var(--red); font-size: 11px; line-height: 14px; vertical-align: middle; }
.orders { position: relative; flex: 1; display: flex; flex-direction: column; min-height: 0; background: #fff; }
.order-tools { display: flex; align-items: center; gap: 20px; margin-left: auto; font-size: 12px; }
.filter { display: flex; align-items: center; gap: 7px; color: var(--ink); }
.filter select { appearance: none; }
.cancel { width: 38px; height: 20px; border: 1px solid var(--blue); color: var(--blue); line-height: 18px; }
.order-table { width: calc(100% - 20px); margin: 0 10px; }
.order-table th { height: 30px; font-size: 12px; color: var(--gray); }
.order-table .clip { padding-left: 32px; overflow: hidden; }
.empty { display: flex; flex-direction: column; align-items: center; padding-top: 20px; font-size: 14px; color: var(--gray); }
.empty svg { width: 47px; height: 52px; margin-bottom: 29px; }
.hscroll { margin-top: auto; padding-bottom: 2px; }
.hscroll i { display: block; width: 87%; height: 4px; background: #dde1e7; }
.w170 { width: 170px; } .w130 { width: 130px; } .w139 { width: 139px; } .w82 { width: 82px; } .w117 { width: 117px; }
.w128 { width: 128px; } .w95 { width: 95px; } .w90 { width: 90px; } .w123 { width: 123px; } .w99 { width: 99px; } .w200 { width: 200px; }
.w98 { width: 98px; } .w62 { width: 62px; } .w80 { width: 80px; } .w60 { width: 60px; } .w70 { width: 70px; }

.status { flex: none; display: flex; align-items: center; height: 37px; padding: 0 12px 0 17px; border-top: 1px solid var(--line); color: var(--mid); white-space: nowrap; }
.lock { width: 12px; height: 14px; margin-right: 3px; }
.st-first { margin: 0 34px 0 10px; }
.pin { width: 14px; height: 14px; margin-right: 12px; }
.st-v { margin-left: 12px; font-size: 14px; }
.st-w { margin-left: 8px; font-size: 14px; }
.st-g { margin-left: 32px; }
.net { display: flex; align-items: center; gap: 5px; margin-left: auto; }
.net svg { width: 20px; height: 14px; }
.net b { font-weight: 400; }
.clock { margin-left: 18px; }
.meter { position: absolute; right: 2px; bottom: 10px; width: 8px; height: 57px; border-radius: 4px; background: #666; overflow: hidden; }
.meter i { position: absolute; inset: 30px 1px 2px; background: repeating-linear-gradient(#4cc76a 0 1px, #57705c 1px 2px); }
</style>
